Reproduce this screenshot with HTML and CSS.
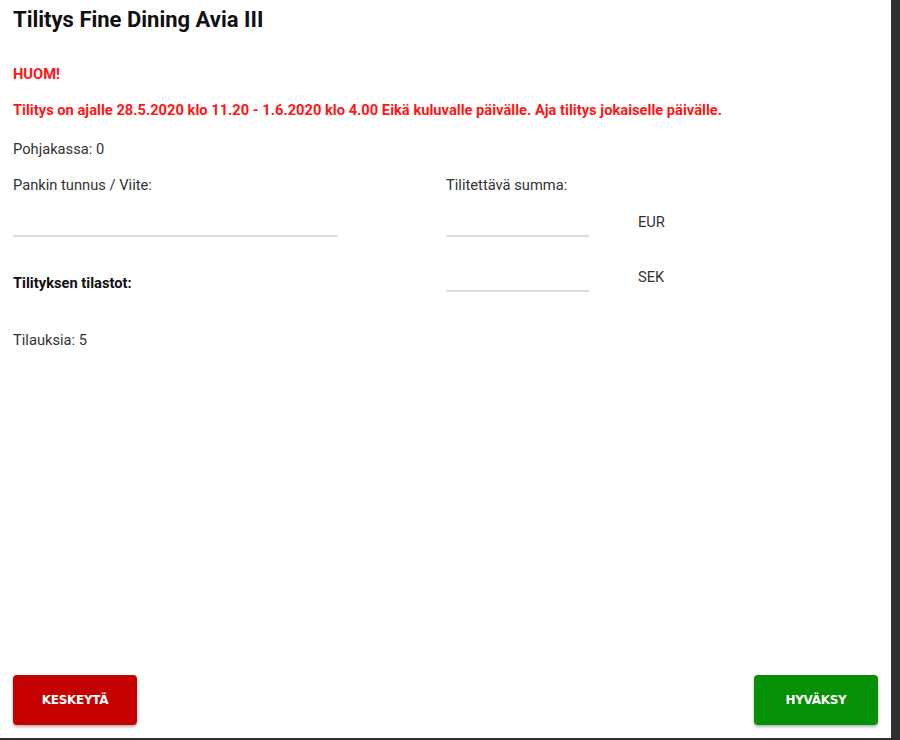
FILE: index.html
```html
<!DOCTYPE html>
<html lang="fi">
<head>
    <meta charset="UTF-8">
    <meta name="viewport" content="width=device-width, initial-scale=1.0">
    <title>Tilitys</title>
    <link rel="stylesheet" href="styles.css">
</head>
<body>
    <div class="dialog">
        <h1>Tilitys Fine Dining Avia III</h1>
        <p class="warning first">HUOM!</p>
        <p class="warning">Tilitys on ajalle 28.5.2020 klo 11.20 - 1.6.2020 klo 4.00 Eikä kuluvalle päivälle. Aja tilitys jokaiselle päivälle.</p>
        <p class="text base">Pohjakassa: 0</p>

        <div class="columns">
            <div class="left">
                <label class="text" for="bankRef">Pankin tunnus / Viite:</label>
                <input type="text" id="bankRef" class="line-input wide">
                <p class="text bold stats">Tilityksen tilastot:</p>
                <p class="text orders">Tilauksia: 5</p>
            </div>
            <div class="right">
                <label class="text" for="sumEur">Tilitettävä summa:</label>
                <div class="amount">
                    <input type="text" id="sumEur" class="line-input">
                    <span class="currency">EUR</span>
                </div>
                <div class="amount">
                    <input type="text" id="sumSek" class="line-input">
                    <span class="currency">SEK</span>
                </div>
            </div>
        </div>

        <div class="actions">
            <button class="btn cancel">KESKEYTÄ</button>
            <button class="btn accept">HYVÄKSY</button>
        </div>
    </div>
</body>
</html>
```

FILE: styles.css
```css
body {
    margin: 0;
    padding: 0;
    background-color: #303030;
    font-family: Roboto, "Liberation Sans", sans-serif;
}
.dialog {
    width: 891px;
    height: 738px;
    background-color: white;
    box-sizing: border-box;
    padding: 7px 13px 13px 13px;
    display: flex;
    flex-direction: column;
}
h1 {
    font-size: 22px;
    line-height: 26px;
    font-weight: bold;
    color: #111;
    margin: 0;
}
.text {
    display: block;
    font-size: 14.7px;
    line-height: 16px;
    color: #333;
    margin: 0;
}
.bold {
    font-weight: bold;
    color: #111;
}
.warning {
    font-size: 14.7px;
    line-height: 16px;
    font-weight: bold;
    color: #ff1515;
    margin: 20px 0 0 0;
}
.warning.first {
    margin-top: 33px;
}
.base {
    margin: 23px 0 20px 0;
}
.columns {
    display: flex;
}
.left {
    width: 433px;
    display: flex;
    flex-direction: column;
}
.right {
    display: flex;
    flex-direction: column;
}
.line-input {
    border: none;
    border-bottom: 2px solid #dddddd;
    outline: none;
    height: 36px;
    width: 143px;
    padding: 0;
    box-sizing: border-box;
    font-size: 14px;
    font-family: inherit;
    display: block;
    margin-top: 8px;
}
.line-input.wide {
    width: 325px;
}
.amount {
    display: flex;
    align-items: flex-start;
    margin-bottom: 19px;
}
.amount + .amount .line-input {
    margin-top: 0;
}
.currency {
    font-size: 14.7px;
    line-height: 16px;
    color: #333;
    margin-left: 49px;
    margin-top: 21px;
}
.amount + .amount .currency {
    margin-top: 13px;
}
.stats {
    margin-top: 38px;
}
.orders {
    margin-top: 41px;
}
.actions {
    margin-top: auto;
    display: flex;
    justify-content: space-between;
}
.btn {
    width: 124px;
    height: 50px;
    border: none;
    border-radius: 4px;
    color: white;
    font-family: "DejaVu Sans", sans-serif;
    font-weight: bold;
    font-size: 12px;
    letter-spacing: -0.3px;
    box-shadow: 0 2px 3px rgba(0, 0, 0, 0.3);
    cursor: pointer;
}
.cancel {
    background-color: #c40000;
}
.accept {
    background-color: #069006;
}
```
